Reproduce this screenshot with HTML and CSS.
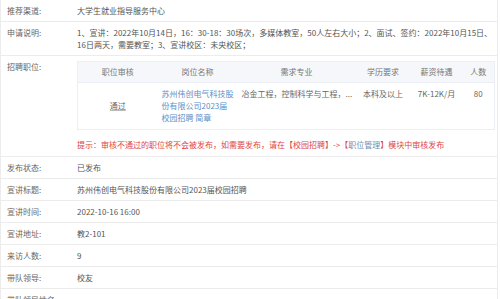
FILE: index.html
```html
<!DOCTYPE html>
<html lang="zh-CN">
<head>
  <meta charset="UTF-8">
  <title>宣讲会详情</title>
  <link rel="stylesheet" href="styles.css">
</head>
<body>
  <div class="detail">
    <div class="row">
      <div class="label">推荐渠道:</div>
      <div class="value">大学生就业指导服务中心</div>
    </div>
    <div class="row">
      <div class="label">申请说明:</div>
      <div class="value">1、宣讲：2022年10月14日，16：30-18：30场次，多媒体教室，50人左右大小；2、面试、签约：2022年10月15日、16日两天，需要教室；3、宣讲校区：未央校区；</div>
    </div>
    <div class="row">
      <div class="label">招聘职位:</div>
      <div class="value">
        <table class="jobs">
          <colgroup>
            <col style="width: 80px">
            <col style="width: 80px">
            <col style="width: 118px">
            <col style="width: 55px">
            <col style="width: 52px">
            <col style="width: 32px">
          </colgroup>
          <thead>
            <tr>
              <th>职位审核</th>
              <th>岗位名称</th>
              <th>需求专业</th>
              <th>学历要求</th>
              <th>薪资待遇</th>
              <th>人数</th>
            </tr>
          </thead>
          <tbody>
            <tr>
              <td class="status"><span>通过</span></td>
              <td class="left"><a href="#">苏州伟创电气科技股份有限公司2023届校园招聘 简章</a></td>
              <td class="left clip">冶金工程，控制科学与工程，...</td>
              <td>本科及以上</td>
              <td>7K-12K/月</td>
              <td>80</td>
            </tr>
          </tbody>
        </table>
        <p class="hint">提示：审核不通过的职位将不会被发布，如需要发布，请在【校园招聘】-&gt;【<span class="muted">职位管理</span>】模块中审核发布</p>
      </div>
    </div>
    <div class="row">
      <div class="label">发布状态:</div>
      <div class="value">已发布</div>
    </div>
    <div class="row">
      <div class="label">宣讲标题:</div>
      <div class="value">苏州伟创电气科技股份有限公司2023届校园招聘</div>
    </div>
    <div class="row">
      <div class="label">宣讲时间:</div>
      <div class="value">2022-10-16 16:00</div>
    </div>
    <div class="row">
      <div class="label">宣讲地址:</div>
      <div class="value">教2-101</div>
    </div>
    <div class="row">
      <div class="label">来访人数:</div>
      <div class="value">9</div>
    </div>
    <div class="row">
      <div class="label">带队领导:</div>
      <div class="value">校友</div>
    </div>
    <div class="row">
      <div class="label">带队领导姓名:</div>
      <div class="value"></div>
    </div>
  </div>
</body>
</html>
```

FILE: styles.css
```css
body {
  margin: 0;
  font-family: "Noto Sans CJK SC", "Noto Sans", sans-serif;
  font-size: 8px;
  line-height: 12px;
  color: #555;
  background-color: #fff;
  overflow: hidden;
}

.detail {
  width: 498px;
  box-sizing: border-box;
  border-left: 1px solid #ececec;
  border-right: 1px solid #ececec;
}

.row {
  display: flex;
  padding: 5px 0 4px;
  border-bottom: 1px solid #ececec;
}

.label {
  width: 70px;
  flex-shrink: 0;
  padding-left: 6px;
  color: #666;
  white-space: nowrap;
}

.value {
  flex: 1;
  min-height: 12px;
}

/* Job table */
.jobs {
  width: 417px;
  table-layout: fixed;
  border-collapse: collapse;
  border: 1px solid #ebeef5;
}

.jobs th {
  background-color: #f5f7fa;
  color: #777;
  font-weight: normal;
  padding: 4px 4px;
  text-align: center;
  border-bottom: 1px solid #ebeef5;
}

.jobs td {
  padding: 5px 4px;
  text-align: center;
  vertical-align: top;
  color: #666;
}

.jobs td.left {
  text-align: left;
}

.jobs td.clip {
  white-space: nowrap;
  overflow: hidden;
}

.jobs td.status {
  vertical-align: middle;
}

.jobs td.status span {
  text-decoration: underline;
  text-decoration-color: #bbb;
}

.jobs a {
  color: #5b8fc6;
  text-decoration: none;
}

.hint {
  margin: 9px 0 1px;
  color: #e0453f;
}

.hint .muted {
  color: #6f8db4;
}
```
